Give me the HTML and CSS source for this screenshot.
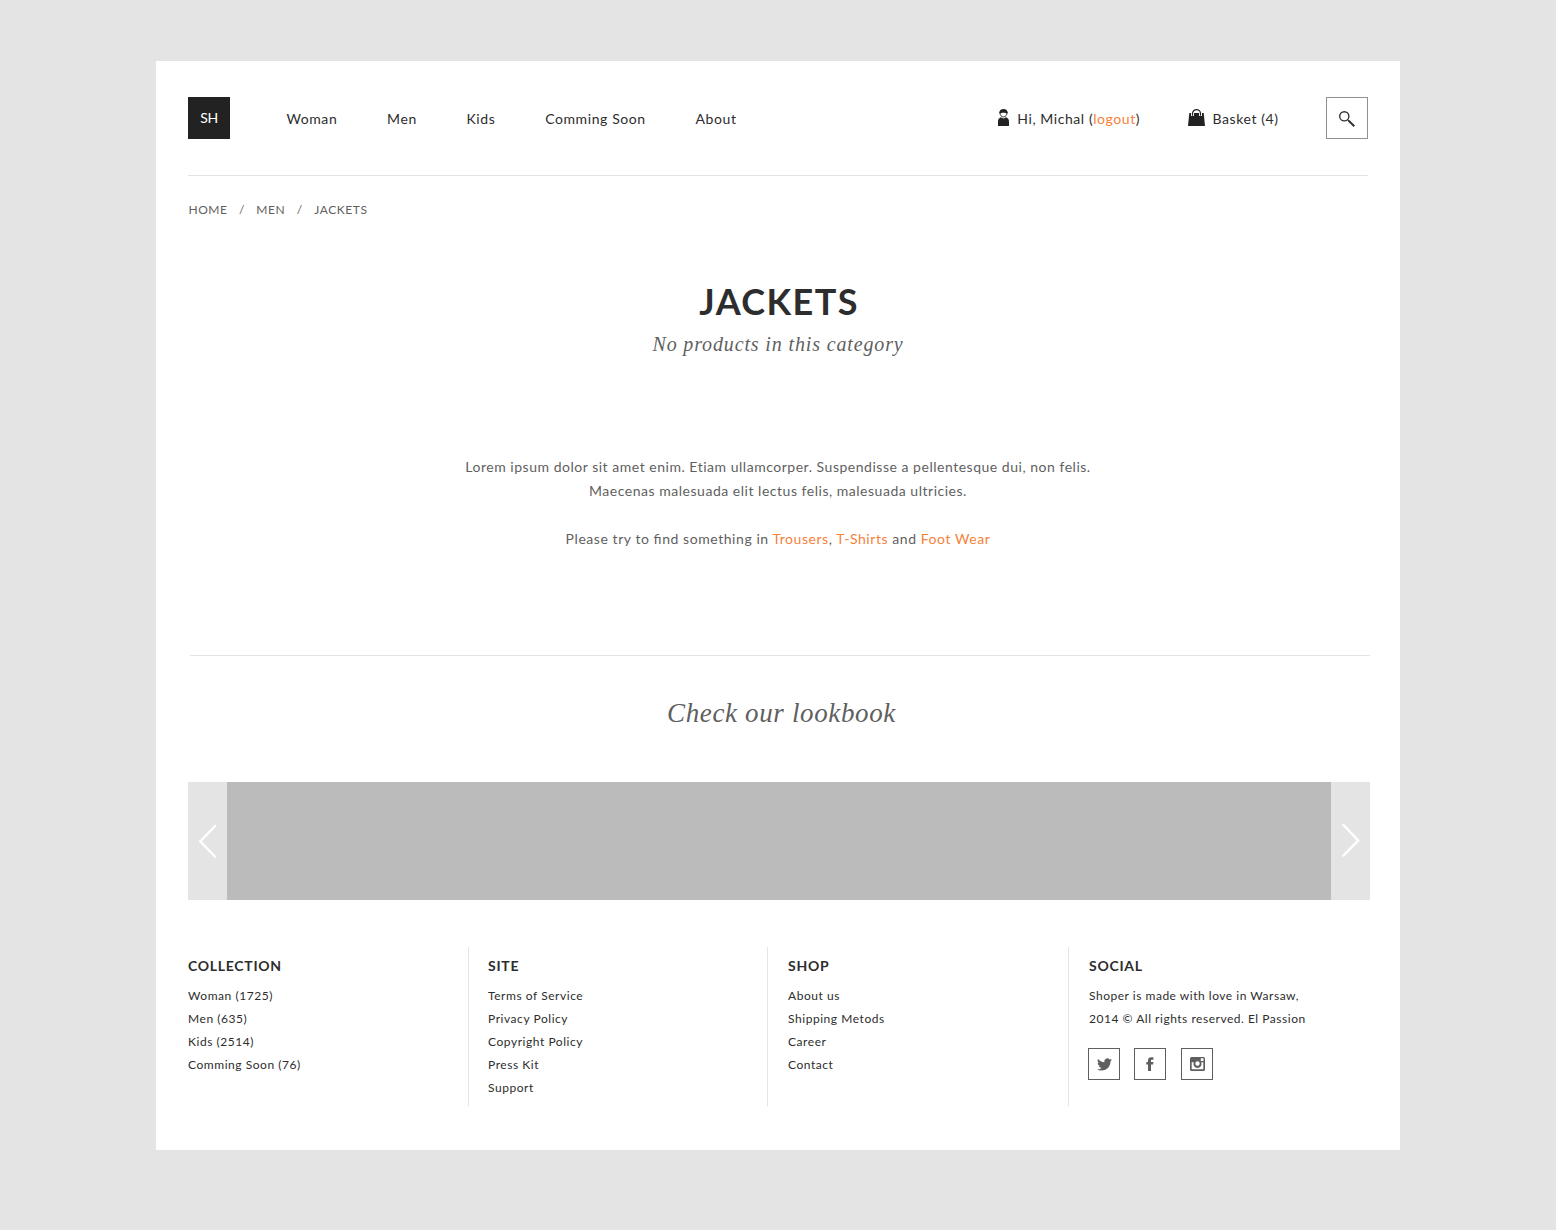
FILE: index.html
```html
<!DOCTYPE html>
<html lang="en">
<head>
<meta charset="utf-8">
<title>Jackets</title>
<link rel="stylesheet" href="styles.css">
</head>
<body>
<div class="page">
  <header class="header">
    <a class="logo">SH</a>
    <nav class="nav">
      <a>Woman</a><a>Men</a><a>Kids</a><a>Comming Soon</a><a>About</a>
    </nav>
    <div class="tools">
      <div class="tool">
        <svg class="icon-user" width="11" height="17" viewBox="0 0 11 17">
          <path d="M1.200 3.900C1.400 1.400 3 0 5.500 0s4.100 1.400 4.300 3.900L8.900 4.600C7.600 3.500 3.400 3.500 2.100 4.600z" fill="#222"/>
          <path d="M1.900 3.500C2 6.100 3.500 8 5.500 8s3.500-1.900 3.600-4.500" fill="none" stroke="#222" stroke-width=".9"/>
          <path d="M0 17v-4.500C0 10.500 1 9.200 2.800 8.300c1.500 1.500 3.900 1.500 5.400 0C10 9.200 11 10.500 11 12.500V17z" fill="#222"/>
        </svg>
        <span>Hi, Michal (<a class="link">logout</a>)</span>
      </div>
      <div class="tool">
        <svg class="icon-bag" width="17" height="17" viewBox="0 0 17 17">
          <path d="M1.300 4h14.400L17 17H0z" fill="#222"/>
          <path d="M4.500 7V4.500a4 4 0 0 1 8 0V7" fill="none" stroke="#fff" stroke-width="3"/>
          <path d="M4.500 6.800V4.600a4 4 0 0 1 8 0v2.200" fill="none" stroke="#222" stroke-width="1.200"/>
        </svg>
        <span>Basket (4)</span>
      </div>
      <button class="search" aria-label="Search">
        <svg width="18" height="18" viewBox="0 0 18 18" fill="none" stroke="#333">
          <circle cx="6.300" cy="6.300" r="4.600" stroke-width="1.400"/>
          <path d="M9.700 9.700l1.300 1.300" stroke-width="1.200"/>
          <path d="M10.700 10.700l5.600 5.600" stroke-width="2"/>
        </svg>
      </button>
    </div>
  </header>

  <div class="crumbs"><a>HOME</a><i>/</i><a>MEN</a><i>/</i><a>JACKETS</a></div>

  <main class="main">
    <h1>JACKETS</h1>
    <p class="subtitle">No products in this category</p>
    <div class="message">
      <p>Lorem ipsum dolor sit amet enim. Etiam ullamcorper. Suspendisse a pellentesque dui, non felis.<br>Maecenas malesuada elit lectus felis, malesuada ultricies.</p>
      <p class="hint">Please try to find something in <a class="link">Trousers</a>, <a class="link">T-Shirts</a> and <a class="link">Foot Wear</a></p>
    </div>
  </main>

  <section class="lookbook">
    <h2>Check our lookbook</h2>
    <div class="carousel">
      <button class="arrow" aria-label="Previous">
        <svg width="20" height="36" viewBox="0 0 20 36"><path d="M17 3L2.300 18.500 17 33.500"/></svg>
      </button>
      <div class="slide"></div>
      <button class="arrow" aria-label="Next">
        <svg width="20" height="36" viewBox="0 0 20 36"><path d="M2.500 2L17.200 17.500 2.500 32.500"/></svg>
      </button>
    </div>
  </section>

  <footer class="footer">
    <div class="col">
      <h3>COLLECTION</h3>
      <ul><li>Woman (1725)</li><li>Men (635)</li><li>Kids (2514)</li><li>Comming Soon (76)</li></ul>
    </div>
    <div class="col">
      <h3>SITE</h3>
      <ul><li>Terms of Service</li><li>Privacy Policy</li><li>Copyright Policy</li><li>Press Kit</li><li>Support</li></ul>
    </div>
    <div class="col col-shop">
      <h3>SHOP</h3>
      <ul><li>About us</li><li>Shipping Metods</li><li>Career</li><li>Contact</li></ul>
    </div>
    <div class="col col-social">
      <h3>SOCIAL</h3>
      <p>Shoper is made with love in Warsaw,<br>2014 © All rights reserved. El Passion</p>
      <div class="social">
        <a aria-label="Twitter"><svg width="15" height="15" viewBox="0 0 24 24"><path d="M23.953 4.570a10 10 0 01-2.825.775 4.958 4.958 0 002.163-2.723c-.951.555-2.005.959-3.127 1.184a4.920 4.920 0 00-8.384 4.482C7.690 8.095 4.067 6.130 1.640 3.162a4.822 4.822 0 00-.666 2.475c0 1.710.870 3.213 2.188 4.096a4.904 4.904 0 01-2.228-.616v.060a4.923 4.923 0 003.946 4.827 4.996 4.996 0 01-2.212.085 4.936 4.936 0 004.604 3.417 9.867 9.867 0 01-6.102 2.105c-.390 0-.779-.023-1.170-.067a13.995 13.995 0 007.557 2.209c9.053 0 13.998-7.496 13.998-13.985 0-.210 0-.420-.015-.630A9.935 9.935 0 0024 4.590z"/></svg></a>
        <a aria-label="Facebook"><svg width="8" height="14" viewBox="0 0 8 14"><path d="M2 14V7.500H.3V5H2V3.500C2 1.200 3.200.2 5.200.2h2.200v2.500H6C5.200 2.700 5 3 5 3.700V5h2.400l-.3 2.500H5V14z"/></svg></a>
        <a aria-label="Instagram"><svg width="15" height="14" viewBox="0 0 15 14"><path fill-rule="evenodd" d="M1.500 0h12A1.500 1.500 0 0 1 15 1.500v11a1.500 1.500 0 0 1-1.500 1.500h-12A1.500 1.500 0 0 1 0 12.500v-11A1.500 1.500 0 0 1 1.500 0zM10.800 1.300v2.700h2.700V1.300zM1.700 5.300v7h11.600v-7h-2A4.100 4.100 0 1 1 3.700 5.300zM7.500 4.300a2.200 2.200 0 1 0 0 4.400 2.200 2.200 0 0 0 0-4.400z"/></svg></a>
      </div>
    </div>
  </footer>
</div>
</body>
</html>
```
FILE: styles.css
```css
* { box-sizing: border-box; margin: 0; padding: 0; }

body {
  background: #e4e4e4;
  color: #2d2d2d;
  font-family: Lato, "Liberation Sans", sans-serif;
  font-size: 14px;
  padding: 61px 156px 80px;
}

button { background: none; border: 0; font: inherit; }
svg { display: block; }
.link { color: #f5813b; }

.page {
  background: #fff;
  width: 1244px;
  height: 1089px;
  padding: 0 30px 0 32px;
}

.header {
  display: flex;
  align-items: center;
  width: 1180px;
  height: 115px;
  border-bottom: 1px solid #e4e4e4;
  line-height: 20px;
}

.logo {
  width: 42px;
  height: 42px;
  background: #222;
  color: #fff;
  line-height: 42px;
  letter-spacing: -.3px;
  text-align: center;
}

.nav {
  display: flex;
  gap: 49.7px;
  margin-left: 56.4px;
  padding-top: 2px;
  letter-spacing: .6px;
}

.tools { display: flex; align-items: center; margin-left: auto; }
.tool { display: flex; align-items: center; gap: 8px; margin-right: 47.500px; letter-spacing: .57px; }
.tool svg { margin-bottom: 1px; }
.tool span { padding-top: 2px; }

.search {
  display: flex;
  align-items: center;
  justify-content: center;
  width: 42px;
  height: 42px;
  border: 1px solid #8f8f8f;
  padding-top: 2px;
}

.crumbs {
  display: flex;
  gap: 11.400px;
  height: 67px;
  padding: 24px 0 0 .4px;
  color: #5f5f5f;
  font-size: 12px;
  line-height: 20px;
  letter-spacing: .58px;
}
.crumbs i { font-style: normal; }

.main {
  width: 1180px;
  height: 412px;
  padding-top: 36px;
  color: #5f5f5f;
  text-align: center;
}
.main h1 {
  padding-left: 2px;
  color: #2d2d2d;
  font-size: 36px;
  line-height: 44px;
  letter-spacing: 1.400px;
}
.subtitle, .lookbook h2 {
  font-family: "Liberation Serif", serif;
  font-style: italic;
  font-weight: 400;
}
.subtitle { padding-top: 1px; font-size: 20px; line-height: 40px; letter-spacing: .86px; }
.message { margin-top: 91px; line-height: 24px; letter-spacing: .52px; }
.message .hint { margin-top: 24px; letter-spacing: .56px; font-feature-settings: "liga" 1; }

.lookbook h2 {
  margin-left: 2px;
  height: 127px;
  border-top: 1px solid #e4e4e4;
  padding: 37px 0 0 3px;
  color: #5f5f5f;
  font-size: 27px;
  line-height: 40px;
  letter-spacing: .64px;
  text-align: center;
}

.carousel { display: flex; height: 118px; }
.arrow {
  display: flex;
  align-items: center;
  justify-content: center;
  width: 39px;
  background: #e4e4e4;
}
.arrow path { fill: none; stroke: #fff; stroke-width: 2.500; stroke-linecap: round; }
.slide { flex: 1; background: #bbb; }

.footer {
  display: grid;
  grid-template-columns: 280px 299px 301px 302px;
  height: 159px;
  margin-top: 47px;
  font-size: 12px;
  line-height: 23px;
  letter-spacing: .55px;
}
.col { padding-top: 8px; }
.col + .col { border-left: 1px solid #e4e4e4; padding-left: 19px; }
.col.col-shop { padding-left: 20px; }
.col h3 { margin-bottom: 7px; font-size: 14px; line-height: 22px; letter-spacing: .72px; }
.col ul { list-style: none; }
.col-social h3, .col-social p { padding-left: 1px; }
.col-social p { letter-spacing: .52px; }

.social { display: flex; gap: 14px; margin-top: 18px; }
.social a {
  display: flex;
  align-items: center;
  justify-content: center;
  width: 32px;
  height: 32px;
  border: 1px solid #5f5f5f;
}
.social a:last-child { margin-left: 1px; }
.social svg { fill: #5f5f5f; }
```
